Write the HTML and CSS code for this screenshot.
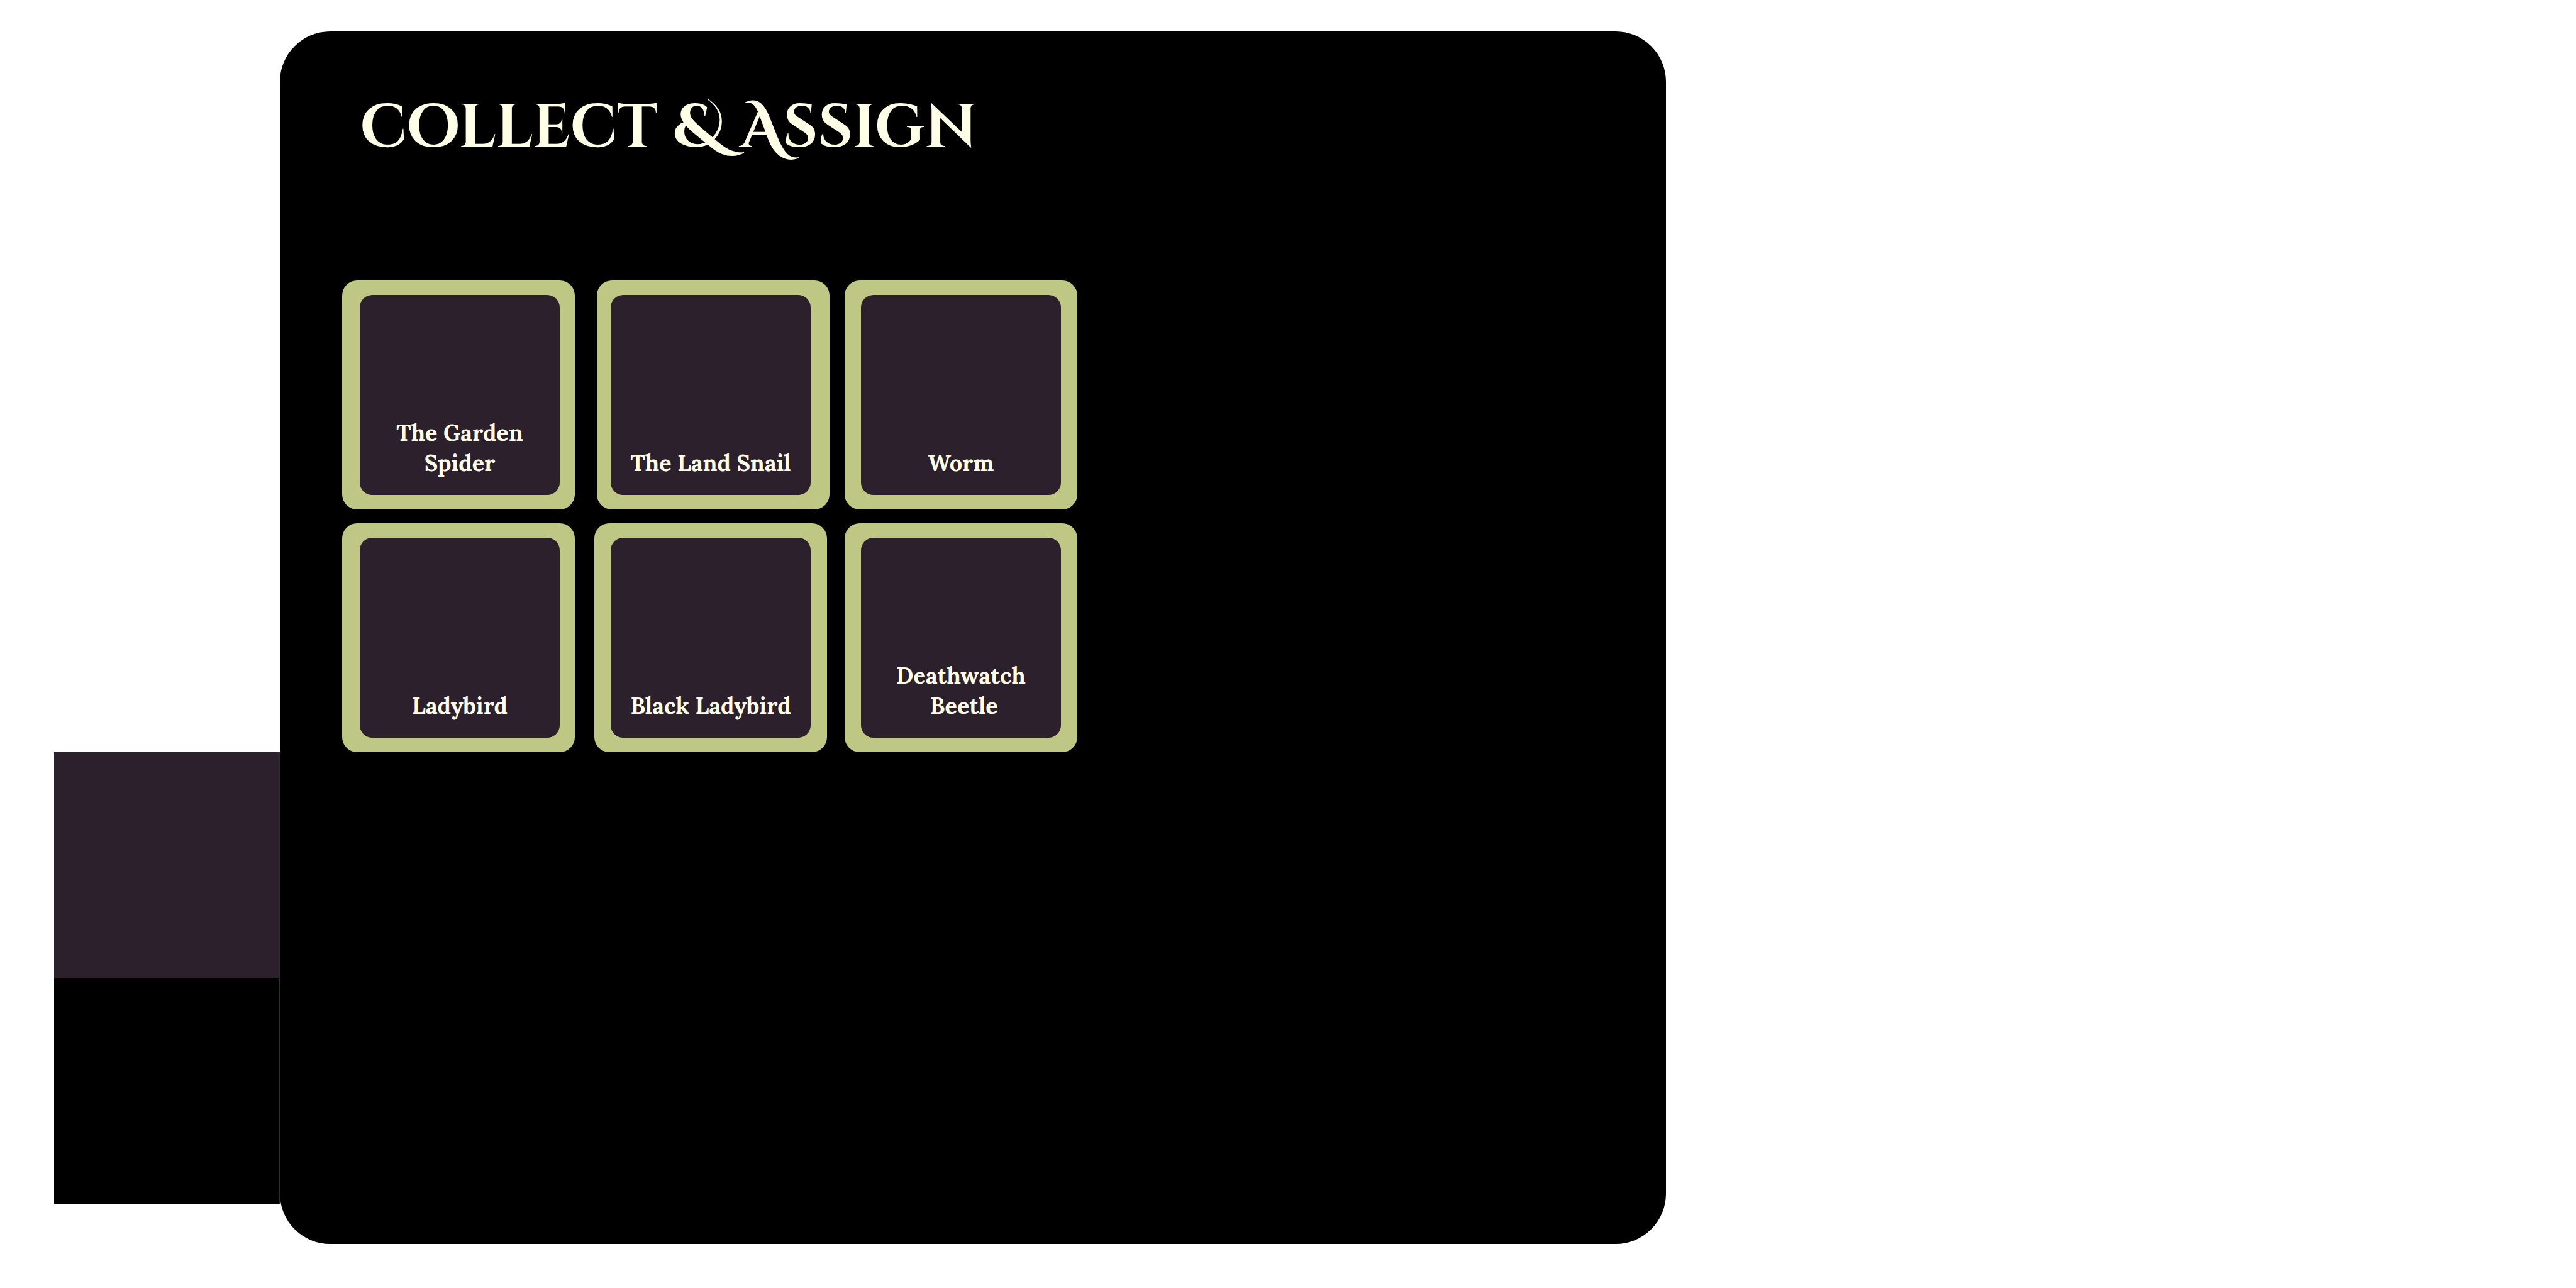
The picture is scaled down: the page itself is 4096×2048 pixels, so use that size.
FILE: index.html
```html
<!DOCTYPE html>
<html lang="en">
<head>
<meta charset="utf-8">
<title>Collect &amp; Assign</title>
<link rel="stylesheet" href="styles.css">
</head>
<body>
<div class="page">
  <div class="swatches">
    <div class="swatch swatch-plum"></div>
    <div class="swatch swatch-black"></div>
  </div>
  <main class="panel">
    <h1 class="title">collect &amp; Assign</h1>
    <div class="collection">
      <ul class="row row-upper">
        <li class="card card-start"><div class="tile">The Garden Spider</div></li>
        <li class="card card-shifted"><div class="tile">The Land Snail</div></li>
        <li class="card"><div class="tile">Worm</div></li>
      </ul>
      <ul class="row row-lower">
        <li class="card card-start"><div class="tile">Ladybird</div></li>
        <li class="card"><div class="tile">Black Ladybird</div></li>
        <li class="card"><div class="tile">Deathwatch &nbsp;Beetle</div></li>
      </ul>
    </div>
  </main>
</div>
</body>
</html>
```
FILE: styles.css
```css
:root {
  --plum: #2c202c;
  --moss: #bec784;
  --cream: #ffffe8;
}

* {
  box-sizing: border-box;
}

body {
  margin: 0;
  background: #fff;
  color: var(--cream);
  font-family: Lora, "Liberation Serif", serif;
  font-weight: 700;
}

.page {
  display: grid;
  grid-template-columns: 86fr 359fr 2204fr 1447fr;
  min-height: 100vh;
  padding: 50px 0 70px;
}

.swatches {
  grid-column: 2;
  align-self: end;
  margin-bottom: 64px;
}

.swatch {
  aspect-ratio: 1;
  border-right: 1px solid #2c2c2c;
}

.swatch-plum {
  background: var(--plum);
}

.swatch-black {
  background: #000;
}

.panel {
  grid-column: 3;
  padding: 94px 99px;
  border-radius: 80px;
  background: #000;
}

.title {
  margin: 0 0 182px;
  padding-left: 28px;
  font-family: "Cinzel Decorative", "Liberation Serif", serif;
  font-size: 96px;
  line-height: 120px;
}

.collection {
  display: grid;
  gap: 22px;
}

.row {
  display: grid;
  margin: 0;
  padding: 0;
  list-style: none;
}

.row-upper {
  grid-template-columns: 405px 394px 370px;
}

.row-lower {
  grid-template-columns: 401px 398px 370px;
}

.card {
  width: 370px;
  padding: 23px 26px;
  border-radius: 24px;
  background: var(--moss);
}

.card-start {
  padding-right: 24px;
  padding-left: 28px;
}

.card-shifted {
  padding-right: 30px;
  padding-left: 22px;
}

.tile {
  display: flex;
  align-items: flex-end;
  justify-content: center;
  aspect-ratio: 1;
  padding: 0 24px 27px;
  border-radius: 20px;
  background: var(--plum);
  font-size: 36px;
  line-height: 48px;
  text-align: center;
}
```
